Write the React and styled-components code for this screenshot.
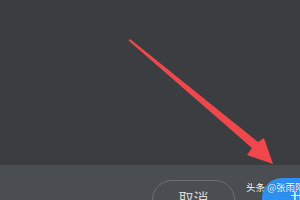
import React from "react";
import styled, { createGlobalStyle } from "styled-components";

const Global = createGlobalStyle`
  html, body { margin: 0; padding: 0; background: #3b3d40; overflow: hidden; }
  body { font-family: "Noto Sans CJK SC", "Noto Sans", sans-serif; }
`;

const Screen = styled.div`
  position: relative;
  width: 300px;
  height: 200px;
  display: flex;
  flex-direction: column;
  overflow: hidden;
`;

const Canvas = styled.div`
  flex-shrink: 0;
  height: 165px;
  background: #3b3d40;
`;

const Footer = styled.div`
  flex: 1;
  min-height: 0;
  overflow: hidden;
  background: #4a4d51;
  display: flex;
  align-items: flex-start;
  padding: 15px 0 0 152px;
`;

const Pill = styled.div`
  box-sizing: border-box;
  flex-shrink: 0;
  width: ${(p) => p.$w}px;
  height: 40px;
  margin-top: ${(p) => p.$top || 0}px;
  margin-left: ${(p) => p.$left || 0}px;
  border-radius: 20px;
  border: ${(p) => (p.$primary ? "none" : "1px solid #6c6f73")};
  background: ${(p) => (p.$primary ? "#2b90f2" : "transparent")};
  color: ${(p) => (p.$primary ? "#ffffff" : "#d6d7d8")};
  font-size: 15px;
  line-height: 20px;
  display: flex;
  justify-content: ${(p) => (p.$primary ? "flex-start" : "center")};
  padding: ${(p) => (p.$primary ? "10px 0 0 28px" : "7px 0 0 0")};
  white-space: nowrap;
`;

const Mark = styled.div`
  position: absolute;
  left: 246px;
  top: 181px;
  font-size: 9.5px;
  line-height: 12px;
  color: #ffffff;
  white-space: nowrap;
  text-shadow: 0 0 1px rgba(0, 0, 0, 0.5);
`;

const Overlay = styled.svg`
  position: absolute;
  left: 0;
  top: 0;
  pointer-events: none;
`;

export default function App() {
  return (
    <Screen>
      <Global />
      <Canvas />
      <Footer>
        <Pill $w={83}>取消</Pill>
        <Pill $w={70} $primary $left={27} $top={-2}>共享</Pill>
      </Footer>
      <Mark>头条 @张雨阳</Mark>
      <Overlay width="300" height="200" viewBox="0 0 300 200">
        <path
          d="M128.5 40.5 L130 39 L258 142 L264 138 L273 164 L247 155 L252 148 Z"
          fill="#f0474c"
        />
      </Overlay>
    </Screen>
  );
}
